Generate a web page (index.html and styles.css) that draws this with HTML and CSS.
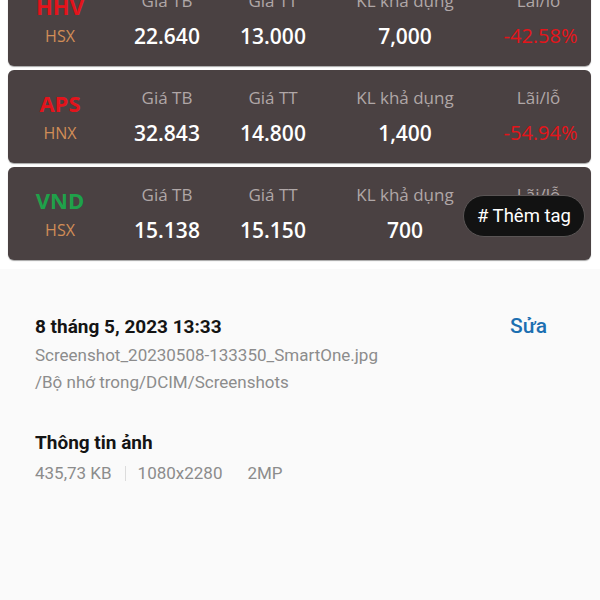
FILE: index.html
```html
<!DOCTYPE html>
<html lang="vi">
<head>
  <meta charset="UTF-8" />
  <title>Chi tiết ảnh</title>
  <link rel="stylesheet" href="styles.css">
</head>
<body>

  <div class="anh">
    <div class="danh-muc">
      <div class="the-ma">
        <div class="ma-cp">
          <span class="ma ma-giam">HHV</span>
          <span class="san">HSX</span>
        </div>
        <span class="nhan">Giá TB</span>
        <span class="nhan">Giá TT</span>
        <span class="nhan">KL khả dụng</span>
        <span class="nhan">Lãi/lỗ</span>
        <span class="gia">22.640</span>
        <span class="gia">13.000</span>
        <span class="gia">7,000</span>
        <span class="lai lai-am">-42.58%</span>
      </div>

      <div class="the-ma">
        <div class="ma-cp">
          <span class="ma ma-giam">APS</span>
          <span class="san">HNX</span>
        </div>
        <span class="nhan">Giá TB</span>
        <span class="nhan">Giá TT</span>
        <span class="nhan">KL khả dụng</span>
        <span class="nhan">Lãi/lỗ</span>
        <span class="gia">32.843</span>
        <span class="gia">14.800</span>
        <span class="gia">1,400</span>
        <span class="lai lai-am">-54.94%</span>
      </div>

      <div class="the-ma">
        <div class="ma-cp">
          <span class="ma ma-tang">VND</span>
          <span class="san">HSX</span>
        </div>
        <span class="nhan">Giá TB</span>
        <span class="nhan">Giá TT</span>
        <span class="nhan">KL khả dụng</span>
        <span class="nhan">Lãi/lỗ</span>
        <span class="gia">15.138</span>
        <span class="gia">15.150</span>
        <span class="gia">700</span>
        <span class="lai lai-duong">0.08%</span>
        <button class="btn-tag"># Thêm tag</button>
      </div>
    </div>
  </div>

  <div class="chi-tiet">
    <div class="dong-ngay">
      <span class="ngay">8 tháng 5, 2023 13:33</span>
      <span class="btn-sua">Sửa</span>
    </div>
    <div class="phu">Screenshot_20230508-133350_SmartOne.jpg</div>
    <div class="phu">/Bộ nhớ trong/DCIM/Screenshots</div>

    <div class="tieu-de">Thông tin ảnh</div>
    <div class="phu thong-so">
      <span>435,73 KB</span>
      <span class="vach"></span>
      <span>1080x2280</span>
      <span class="cach">2MP</span>
    </div>
  </div>

</body>
</html>
```

FILE: styles.css
```css
body {
  margin: 0;
  background: #fafafa;
  font-family: Roboto, "Noto Sans", sans-serif;
  height: 600px;
  overflow: hidden;
}
.anh {
  background: #fff;
  padding: 0 9px 9px 8px;
}
.danh-muc {
  display: flex;
  flex-direction: column;
  gap: 4px;
  margin-top: -27px;
}
.the-ma {
  position: relative;
  display: grid;
  grid-template-columns: 104px 110px 102px 162px 105px;
  grid-template-rows: 24px 28px;
  row-gap: 9px;
  padding: 16px 0;
  background: #4a4142;
  border-radius: 6px;
  box-shadow: 0 1px 1px rgba(0, 0, 0, 0.35);
  font-family: "Open Sans", sans-serif;
  text-align: center;
}
.ma-cp {
  grid-row: 1 / 3;
  display: flex;
  flex-direction: column;
  align-items: center;
  padding-top: 5px;
  gap: 4px;
}
.ma {
  font-size: 22px;
  font-weight: 700;
  line-height: 24px;
}
.ma-giam {
  color: #e3141c;
}
.ma-tang {
  color: #1fa14a;
}
.san {
  font-size: 16px;
  line-height: 28px;
  color: #d18d57;
}
.nhan {
  font-size: 17px;
  line-height: 24px;
  color: #b0a7a7;
}
.gia {
  font-size: 21px;
  font-weight: 600;
  line-height: 28px;
  color: #fff;
}
.lai {
  font-size: 20px;
  line-height: 28px;
  padding-left: 4px;
}
.lai-am {
  color: #e5141a;
}
.lai-duong {
  color: #14803a;
}
.btn-tag {
  position: absolute;
  left: 455px;
  top: 28px;
  width: 122px;
  height: 42px;
  border: 1px solid #5a5555;
  border-radius: 21px;
  background: #121212;
  color: #fff;
  font-family: Roboto, sans-serif;
  font-size: 18.5px;
  padding: 0;
}
.chi-tiet {
  padding: 45px 35px 0;
}
.dong-ngay {
  display: flex;
  justify-content: space-between;
  align-items: center;
  height: 24px;
}
.ngay {
  font-size: 19px;
  font-weight: 700;
  color: #141414;
}
.btn-sua {
  font-size: 21px;
  font-weight: 500;
  color: #1c6fb1;
  margin-right: 18px;
}
.phu {
  font-size: 17px;
  line-height: 27px;
  color: #8c8c8c;
}
.dong-ngay + .phu {
  margin-top: 4px;
}
.tieu-de {
  margin-top: 35px;
  font-size: 19px;
  font-weight: 700;
  line-height: 24px;
  color: #141414;
}
.thong-so {
  margin-top: 5px;
  display: flex;
  align-items: center;
}
.vach {
  width: 1px;
  height: 15px;
  background: #dcdcdc;
  margin: 0 12px 0 13px;
}
.cach {
  margin-left: 25px;
}
```
